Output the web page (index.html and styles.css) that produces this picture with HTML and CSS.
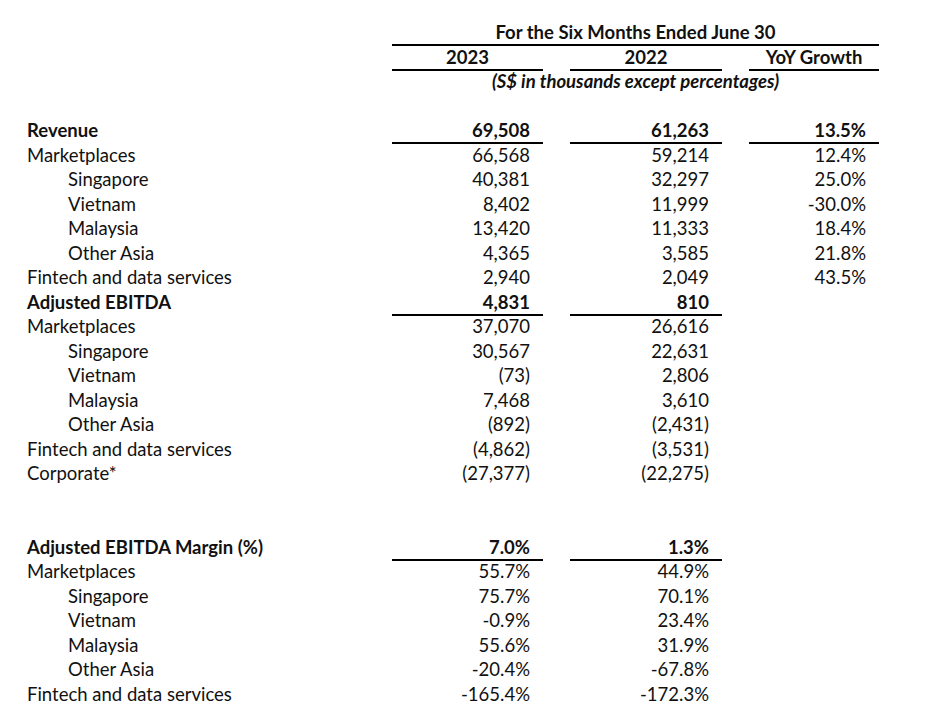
FILE: index.html
```html
<!DOCTYPE html>
<html>
<head>
<meta charset="utf-8">
<link rel="stylesheet" href="styles.css">
</head>
<body>
<div class="sheet">
  <div class="row"><div></div><div class="hd span3 rule">For the Six Months Ended June 30</div></div>
  <div class="row"><div></div><div class="hd rule">2023</div><div class="hd rule">2022</div><div class="hd rule">YoY Growth</div></div>
  <div class="row"><div></div><div class="hd span3 it">(S$ in thousands except percentages)</div></div>
  <div class="row"></div>

  <div class="row b"><div class="lbl">Revenue</div><div class="v rule">69,508</div><div class="v rule">61,263</div><div class="v rule">13.5%</div></div>
  <div class="row"><div class="lbl">Marketplaces</div><div class="v">66,568</div><div class="v">59,214</div><div class="v">12.4%</div></div>
  <div class="row"><div class="lbl sub">Singapore</div><div class="v">40,381</div><div class="v">32,297</div><div class="v">25.0%</div></div>
  <div class="row"><div class="lbl sub">Vietnam</div><div class="v">8,402</div><div class="v">11,999</div><div class="v">-30.0%</div></div>
  <div class="row"><div class="lbl sub">Malaysia</div><div class="v">13,420</div><div class="v">11,333</div><div class="v">18.4%</div></div>
  <div class="row"><div class="lbl sub">Other Asia</div><div class="v">4,365</div><div class="v">3,585</div><div class="v">21.8%</div></div>
  <div class="row"><div class="lbl">Fintech and data services</div><div class="v">2,940</div><div class="v">2,049</div><div class="v">43.5%</div></div>

  <div class="row b"><div class="lbl">Adjusted EBITDA</div><div class="v rule">4,831</div><div class="v rule">810</div><div></div></div>
  <div class="row"><div class="lbl">Marketplaces</div><div class="v">37,070</div><div class="v">26,616</div><div></div></div>
  <div class="row"><div class="lbl sub">Singapore</div><div class="v">30,567</div><div class="v">22,631</div><div></div></div>
  <div class="row"><div class="lbl sub">Vietnam</div><div class="v">(73)</div><div class="v">2,806</div><div></div></div>
  <div class="row"><div class="lbl sub">Malaysia</div><div class="v">7,468</div><div class="v">3,610</div><div></div></div>
  <div class="row"><div class="lbl sub">Other Asia</div><div class="v">(892)</div><div class="v">(2,431)</div><div></div></div>
  <div class="row"><div class="lbl">Fintech and data services</div><div class="v">(4,862)</div><div class="v">(3,531)</div><div></div></div>
  <div class="row"><div class="lbl">Corporate*</div><div class="v">(27,377)</div><div class="v">(22,275)</div><div></div></div>
  <div class="row"></div>
  <div class="row"></div>

  <div class="row b"><div class="lbl">Adjusted EBITDA Margin (%)</div><div class="v rule">7.0%</div><div class="v rule">1.3%</div><div></div></div>
  <div class="row"><div class="lbl">Marketplaces</div><div class="v">55.7%</div><div class="v">44.9%</div><div></div></div>
  <div class="row"><div class="lbl sub">Singapore</div><div class="v">75.7%</div><div class="v">70.1%</div><div></div></div>
  <div class="row"><div class="lbl sub">Vietnam</div><div class="v">-0.9%</div><div class="v">23.4%</div><div></div></div>
  <div class="row"><div class="lbl sub">Malaysia</div><div class="v">55.6%</div><div class="v">31.9%</div><div></div></div>
  <div class="row"><div class="lbl sub">Other Asia</div><div class="v">-20.4%</div><div class="v">-67.8%</div><div></div></div>
  <div class="row"><div class="lbl">Fintech and data services</div><div class="v">-165.4%</div><div class="v">-172.3%</div><div></div></div>
</div>
</body>
</html>
```

FILE: styles.css
```css
html, body {
  margin: 0;
  padding: 0;
  background: #ffffff;
}

body {
  font-family: Lato, "Open Sans", sans-serif;
  font-size: 18.5px;
  color: #111111;
}

.sheet {
  padding: 18px 0 0 27px;
}

.row {
  display: grid;
  grid-template-columns: 338px 151px 152px 130px;
  column-gap: 27px;
  height: 24.5px;
  line-height: 23px;
}

.row > div {
  white-space: nowrap;
  box-sizing: border-box;
  padding-top: 3px;
}

.b {
  font-weight: 700;
}

.hd {
  font-weight: 700;
  text-align: center;
}

.span3 {
  grid-column: 2 / 5;
}

.it {
  font-style: italic;
}

.rule {
  border-bottom: 2px solid #000000;
}

.lbl.sub {
  padding-left: 41px;
}

.v {
  text-align: right;
  padding-right: 13px;
}
```
